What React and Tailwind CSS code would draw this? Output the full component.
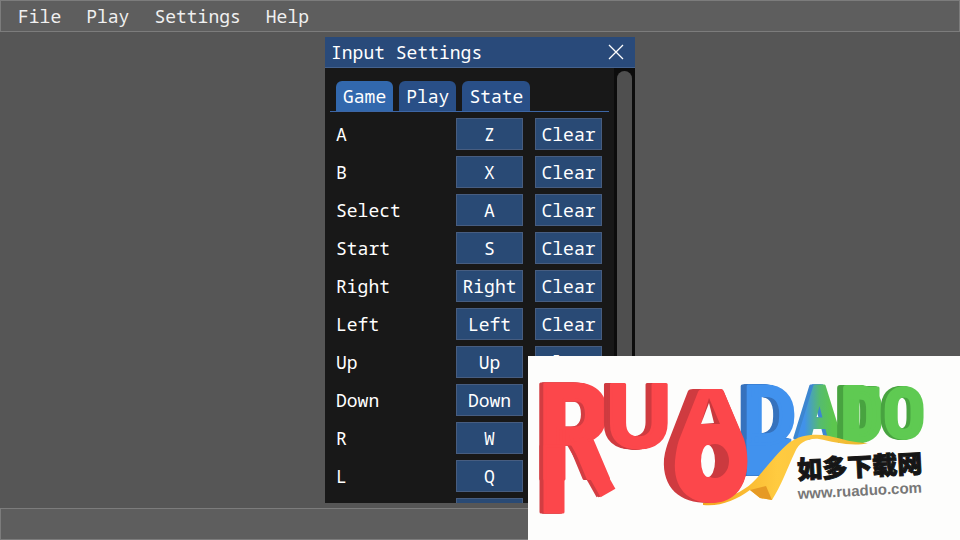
import { useState } from 'react';

const menus = ['File', 'Play', 'Settings', 'Help'];

const tabs = ['Game', 'Play', 'State'];

const bindings = [
  { name: 'A', key: 'Z' },
  { name: 'B', key: 'X' },
  { name: 'Select', key: 'A' },
  { name: 'Start', key: 'S' },
  { name: 'Right', key: 'Right' },
  { name: 'Left', key: 'Left' },
  { name: 'Up', key: 'Up' },
  { name: 'Down', key: 'Down' },
  { name: 'R', key: 'W' },
  { name: 'L', key: 'Q' },
  { name: '', key: '' },
];

function BindButton({ children, ...props }) {
  return (
    <button
      className="block h-8 w-[67px] border border-[#475d80] bg-[#294a75] text-center leading-[30px] hover:bg-[#3268ad]"
      {...props}
    >
      {children}
    </button>
  );
}

function Logo() {
  return (
    <svg viewBox="0 0 432 184" className="block w-full">
      <defs>
        <linearGradient id="ribbon" x1="0" x2="1">
          <stop offset="0" stopColor="#f3a51f" />
          <stop offset="0.45" stopColor="#ffcb40" />
          <stop offset="0.7" stopColor="#fbc540" />
          <stop offset="1" stopColor="#e9b52a" />
        </linearGradient>
        <linearGradient id="blueGreen" x1="0" x2="1">
          <stop offset="0.15" stopColor="#4192ea" />
          <stop offset="0.5" stopColor="#55bb70" />
          <stop offset="0.8" stopColor="#5cc64e" />
        </linearGradient>
      </defs>

      <g className="font-['Roboto_Condensed',Roboto,sans-serif] font-bold" strokeLinejoin="round" strokeWidth="3">
        {/* R with a long stem and leg */}
        <g
          fill="#fc474b"
          stroke="#fc474b"
          className="[filter:drop-shadow(-2px_0_0_#d23d42)_drop-shadow(-2px_0_0_#d23d42)]"
        >
          <text x="9" y="123" fontSize="134">R</text>
          <rect x="17" y="90" width="18" height="66" />
          <line x1="50" y1="84" x2="80" y2="137" strokeWidth="17" />
        </g>

        <g
          fill="#fc474b"
          stroke="#fc474b"
          className="font-['Liberation_Sans',sans-serif] [filter:drop-shadow(-2px_0_0_#cf3b40)_drop-shadow(-2px_0_0_#cf3b40)_drop-shadow(-2px_0_0_#cf3b40)]"
        >
          <text x="78" y="91" fontSize="91">U</text>
        </g>

        {/* Blue D, its foot runs down behind the ribbon */}
        <g
          fill="#4192ee"
          stroke="#4192ee"
          className="font-['Roboto',sans-serif] [filter:drop-shadow(-2px_0_0_#3672bd)_drop-shadow(-2px_0_0_#3672bd)_drop-shadow(-2px_0_0_#3672bd)]"
        >
          <path d="M220 84 H262 Q250 112 240 118 H220 Z" />
          <text x="215" y="88" fontSize="82">D</text>
        </g>

        <g
          fill="url(#blueGreen)"
          stroke="url(#blueGreen)"
          className="[filter:drop-shadow(-2px_0_0_#3c86d0)_drop-shadow(-2px_0_0_#3c86d0)]"
        >
          <text x="270" y="82" fontSize="72">A</text>
        </g>

        <g
          fill="#5fca52"
          stroke="#5fca52"
          className="[filter:drop-shadow(-2px_0_0_#48a340)_drop-shadow(-2px_0_0_#48a340)_drop-shadow(-2px_0_0_#48a340)]"
        >
          <rect x="342" y="32" width="8" height="30" />
          <text x="314" y="84" fontSize="72" strokeWidth="6">D</text>
        </g>

        <g
          fill="#5fca52"
          stroke="#5fca52"
          className="[filter:drop-shadow(-2px_0_0_#48a340)_drop-shadow(-2px_0_0_#48a340)]"
        >
          <text x="355" y="82" fontSize="70">O</text>
        </g>
      </g>

      {/* Ribbon */}
      <path
        d="M175 147 C196 143 215 138 229 122 C241 108 251 95 262 86 C272 79 287 77 301 80 C315 83 325 87 340 87 C325 91 305 86 291 83 C279 82 271 87 267 96 C259 113 253 130 244 144 L232 142 L222 134 C208 144 192 151 175 149 Z"
        fill="url(#ribbon)"
      />
      <path d="M222 134 L238 130 L244 144 L232 142 Z" fill="#e69a24" />

      {/* Red drop */}
      <path
        d="M160 35 Q161 33 165 33 L193 33 Q195 33 196 36 L215 82 C225 112 218 147 180 147 C152 147 134 132 136 103 C137 95 139 89 141 84 Z"
        fill="#cf3b40"
      />
      <path
        d="M170 36 Q171 33 175 33 L192 33 Q195 33 196 36 L216 83 C225 112 217 147 184 147 C160 147 145 132 147 105 C148 96 149 90 151 84 Z"
        fill="#fc474b"
      />
      <path d="M181 42 L192 68 L173 68 Z" fill="#c9383d" />
      <path d="M181 47 L186 67 L173 68 Z" fill="#fdfdfc" />
      <ellipse cx="187" cy="105" rx="14" ry="17" fill="#cb3a3f" />
      <ellipse cx="180" cy="105" rx="7" ry="16" fill="#fdfdfc" />

      <g transform="rotate(-3 270 126)">
        <text
          x="270"
          y="123"
          fontSize="25"
          fill="#161616"
          stroke="#161616"
          className="font-['Noto_Sans_CJK_SC',sans-serif] font-black"
        >
          如多下载网
        </text>
        <text x="269" y="143" fontSize="15" fill="#777777" className="font-['Liberation_Sans',sans-serif] font-bold">
          www.ruaduo.com
        </text>
      </g>
    </svg>
  );
}

function App() {
  const [tab, setTab] = useState('Game');

  return (
    <div className="relative flex h-screen flex-col overflow-hidden bg-[#565656] font-['Noto_Sans_Mono','DejaVu_Sans_Mono',monospace] text-lg leading-6 text-white">

      {/* Menu bar */}
      <nav className="flex h-8 shrink-0 items-center gap-[25px] border border-[#7c7c7c] bg-[#5e5e5e] px-[17px] text-[#f0f0f0]">
        {menus.map((menu) => (
          <button key={menu}>{menu}</button>
        ))}
      </nav>

      <main className="flex min-h-0 flex-1 justify-center py-[5px]">
        <section className="flex w-[310px] flex-col bg-[#181818]">

          {/* Title bar */}
          <header className="flex h-[31px] shrink-0 items-center justify-between border-b border-[#45628e] bg-[#294a7a] pl-1.5 pr-[11px]">
            <h1>Input Settings</h1>
            <button aria-label="Close">
              <svg width="16" height="16" viewBox="0 0 16 16" stroke="white" strokeWidth="1.3">
                <path d="M1 1 L15 15 M15 1 L1 15" />
              </svg>
            </button>
          </header>

          <div className="flex min-h-0 flex-1">
            <div className="min-w-0 flex-1 overflow-hidden px-[5px] pt-[13px]">
              <div role="tablist" className="flex gap-1.5 border-b border-[#3d66a5] px-1.5">
                {tabs.map((name) => (
                  <button
                    key={name}
                    role="tab"
                    aria-selected={tab === name}
                    onClick={() => setTab(name)}
                    className={
                      tab === name
                        ? 'h-[30px] rounded-t-md bg-[#3268ad] px-[7px]'
                        : 'h-[30px] rounded-t-md bg-[#294f87] px-[7px]'
                    }
                  >
                    {name}
                  </button>
                ))}
              </div>

              <table className="mx-1.5 mt-1.5">
                <tbody>
                  {bindings.map(({ name, key }, i) => (
                    <tr key={i}>
                      <th scope="row" className="w-[120px] p-0 pb-1.5 text-left font-normal">{name}</th>
                      <td className="p-0 pb-1.5 pr-3">
                        <BindButton aria-label={`Bind ${name}`}>{key}</BindButton>
                      </td>
                      <td className="p-0 pb-1.5">
                        <BindButton aria-label={`Clear ${name}`}>{name && 'Clear'}</BindButton>
                      </td>
                    </tr>
                  ))}
                </tbody>
              </table>
            </div>

            {/* Scrollbar */}
            <div className="w-[21px] shrink-0 bg-[#0c0c0c] px-[3px] py-[3px]">
              <div className="h-full rounded-full bg-[#4f4f4f]"></div>
            </div>
          </div>
        </section>
      </main>

      {/* Status bar */}
      <footer className="h-8 shrink-0 border border-[#7c7c7c] bg-[#5e5e5e]"></footer>

      <div className="absolute right-0 bottom-0 w-[432px] bg-[#fdfdfc]">
        <Logo />
      </div>
    </div>
  );
}

export default App;
